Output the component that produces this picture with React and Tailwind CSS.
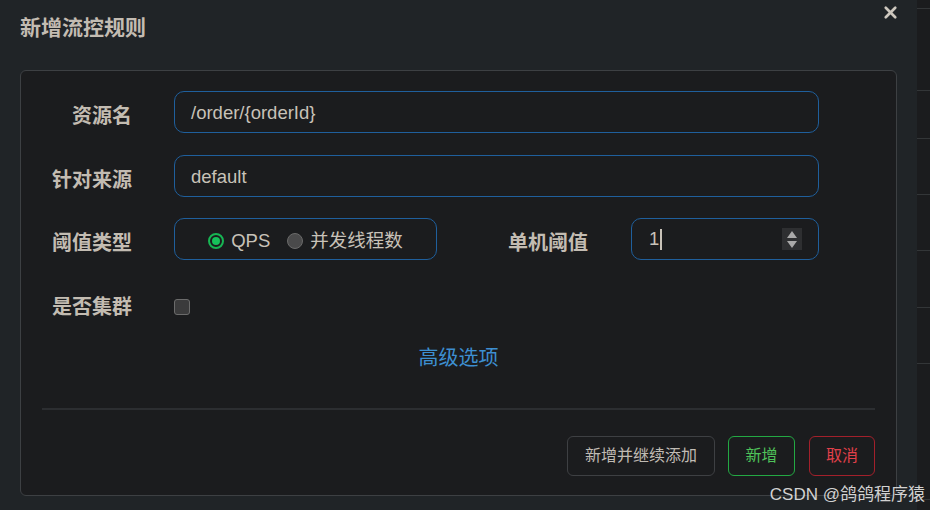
import React from "react";
import { X } from "lucide-react";

const font = { fontFamily: '"Liberation Sans", "Noto Sans CJK SC", sans-serif' };

const Label = ({ children, className = "" }) => (
  <div className={`text-[20px] font-bold text-[#c3bcb2] leading-none whitespace-nowrap ${className}`}>
    {children}
  </div>
);

const Field = ({ value }) => (
  <div className="w-[645px] h-[42px] rounded-[10px] border border-[#1f5f9c] flex items-center px-[16px] pt-[2px] text-[18.5px] text-[#c8c2b8]">
    {value}
  </div>
);

const App = () => {
  return (
    <div className="w-[930px] h-[510px] flex bg-[#202427] overflow-hidden relative" style={font}>
      {/* dialog */}
      <div className="w-[917px] h-full flex flex-col">
        <div className="flex justify-between items-start pl-[20px] pr-[17px]">
          <div className="mt-[14px] text-[21px] font-bold text-[#c3bcb2] leading-[27px]">新增流控规则</div>
          <X className="mt-[3px]" size={19} strokeWidth={3.4} color="#cdc7be" />
        </div>

        <div className="mx-[20px] mt-[29px] h-[426px] rounded-[6px] border border-[#3d4043] bg-[#1b1c1e] flex flex-col pt-[20px] pb-[19px]">
          {/* rows */}
          <div className="flex items-center">
            <Label className="w-[111px] text-right pt-[8px]">资源名</Label>
            <div className="ml-[42px]">
              <Field value="/order/{orderId}" />
            </div>
          </div>

          <div className="flex items-center mt-[22px]">
            <Label className="w-[111px] text-right pt-[8px]">针对来源</Label>
            <div className="ml-[42px]">
              <Field value="default" />
            </div>
          </div>

          <div className="flex items-center mt-[21px]">
            <Label className="w-[111px] text-right pt-[7px]">阈值类型</Label>
            <div className="ml-[42px] w-[263px] h-[42px] rounded-[10px] border border-[#1f5f9c] flex items-center justify-center gap-[17px] pt-[3px] text-[18.5px] text-[#c8c2b8]">
              <span className="flex items-center gap-[7px]">
                <span className="w-[16px] h-[16px] rounded-full border-[2px] border-[#17b553] p-[2px] flex">
                  <span className="flex-1 rounded-full bg-[#16c15a]" />
                </span>
                QPS
              </span>
              <span className="flex items-center gap-[7px]">
                <span className="w-[16px] h-[16px] rounded-full bg-[#4a4a4b] border border-[#6a6a6a]" />
                并发线程数
              </span>
            </div>
            <Label className="ml-[71px] w-[82px] pt-[7px]">单机阈值</Label>
            <div className="ml-[41px] w-[188px] h-[42px] rounded-[10px] border border-[#1f5f9c] flex items-center pl-[17px] pr-[16px] text-[18.5px] text-[#c8c2b8]">
              <span>1</span>
              <span className="ml-[1px] w-[2px] h-[21px] bg-[#c8c2b8]" />
              <div className="ml-auto w-[20px] h-[22px] bg-[#2e2f31] flex flex-col items-center justify-center gap-[3px]">
                <svg width="10" height="7" viewBox="0 0 10 7">
                  <path d="M5 0 L10 7 L0 7 Z" fill="#a9a9a9" />
                </svg>
                <svg width="10" height="7" viewBox="0 0 10 7">
                  <path d="M0 0 L10 0 L5 7 Z" fill="#a9a9a9" />
                </svg>
              </div>
            </div>
          </div>

          <div className="flex items-center mt-[26px] h-[42px]">
            <Label className="w-[111px] text-right">是否集群</Label>
            <div className="ml-[42px] w-[16px] h-[16px] rounded-[3px] bg-[#3b3b3c] border border-[#6b6b6b]" />
          </div>

          <div className="mt-[16px] flex justify-center text-[20px] leading-[28px] text-[#3d8fd1]">高级选项</div>

          <div className="mt-[36px] mx-[21px] h-[2px] bg-[#2c2e31]" />

          <div className="mt-auto mr-[21px] flex justify-end text-[16px]">
            <button className="w-[148px] h-[40px] rounded-[6px] border border-[#3e4043] text-[#c0bbb4]">新增并继续添加</button>
            <button className="ml-[13px] w-[67px] h-[40px] rounded-[6px] border border-[#23a843] text-[#4fc25a]">新增</button>
            <button className="ml-[14px] w-[66px] h-[40px] rounded-[6px] border border-[#a3202b] text-[#e0404a]">取消</button>
          </div>
        </div>
      </div>

      {/* table behind the dialog */}
      <div className="flex-1 bg-[#1b1c1e] flex flex-col">
        <div className="h-[9px] border-b border-[#333638]" />
        <div className="h-[82px] border-b border-[#333638]" />
        <div className="h-[48px] border-b border-[#333638]" />
        <div className="h-[56px] border-b border-[#333638]" />
        <div className="h-[56px] border-b border-[#333638]" />
        <div className="h-[57px] border-b border-[#333638]" />
        <div className="h-[56px] border-b border-[#333638]" />
        <div className="h-[136px] border-b border-[#333638]" />
      </div>

      {/* watermark */}
      <div className="absolute right-[5px] bottom-[5px] text-[17px] leading-[20px] text-[#d2d2d2] whitespace-nowrap">
        CSDN @鸽鸽程序猿
      </div>
    </div>
  );
};

export default App;
